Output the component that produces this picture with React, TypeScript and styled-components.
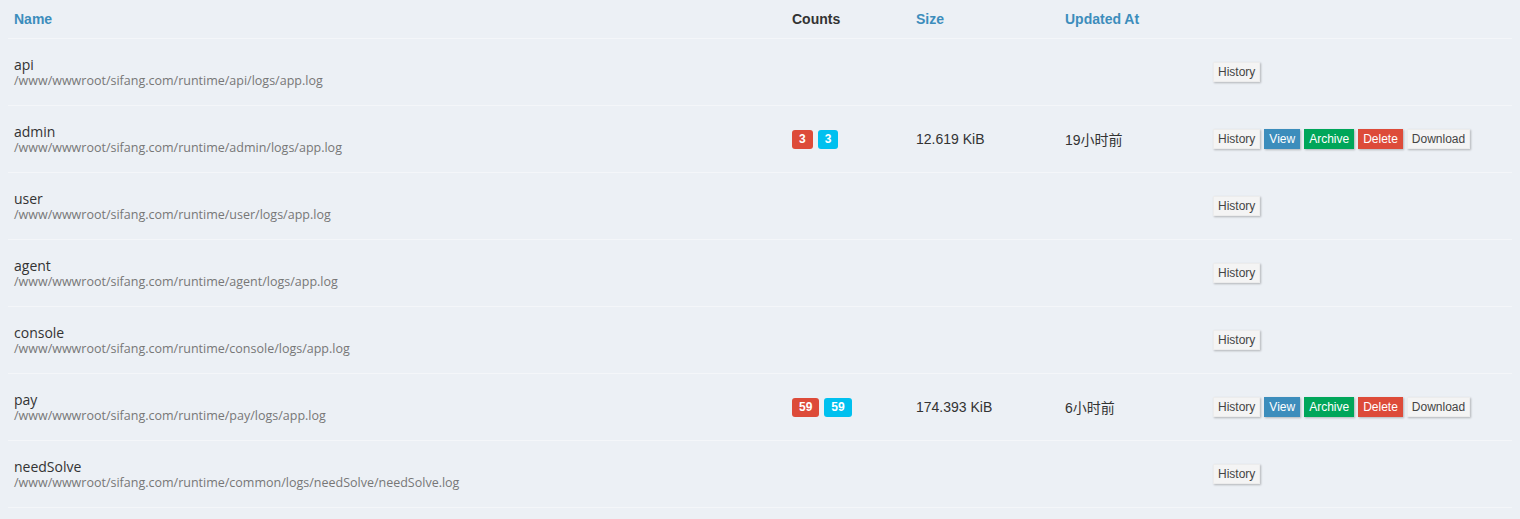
import React from "react";
import styled, { createGlobalStyle } from "styled-components";

const Global = createGlobalStyle`
  html, body { margin: 0; padding: 0; background: #ecf0f5; }
  body { font-family: "Liberation Sans", Arial, sans-serif; color: #333; }
`;

const Wrap = styled.div`
  padding: 0 8px;
`;

const Table = styled.table`
  width: 100%;
  border-collapse: collapse;
  table-layout: fixed;
`;

const Th = styled.th<{ $w?: number; $plain?: boolean }>`
  ${(p) => (p.$w ? `width: ${p.$w}px;` : "")}
  height: 38px;
  padding: 0 6px;
  text-align: left;
  vertical-align: middle;
  font-family: "Liberation Sans", Arial, sans-serif;
  font-size: 14px;
  font-weight: bold;
  color: ${(p) => (p.$plain ? "#333" : "#3c8dbc")};
`;

const Tr = styled.tr`
  border-top: 1px solid #f4f6f9;
  border-bottom: 1px solid #f4f6f9;
`;

const Td = styled.td`
  height: 66px;
  padding: 0 6px;
  vertical-align: middle;
  font-size: 14px;
  color: #333;
`;

const Name = styled.div`
  font-family: "Open Sans", "Noto Sans", sans-serif;
  font-size: 14px;
  line-height: 17px;
  color: #333;
`;

const Path = styled.div`
  font-family: "Open Sans", "Noto Sans", sans-serif;
  font-size: 12.5px;
  line-height: 15px;
  color: #777;
`;

const Badge = styled.span<{ $c: string }>`
  display: inline-block;
  margin-right: 5px;
  padding: 0 7px;
  height: 19px;
  line-height: 19px;
  border-radius: 3px;
  background: ${(p) => p.$c};
  color: #fff;
  font-family: "Liberation Sans", Arial, sans-serif;
  font-size: 12px;
  font-weight: bold;
  vertical-align: middle;
`;

const Cjk = styled.span`
  font-family: "Liberation Sans", Arial, "Noto Sans CJK SC", sans-serif;
`;

const Actions = styled.div`
  display: flex;
  gap: 4px;
  align-items: center;
`;

const Btn = styled.button<{ $bg?: string }>`
  height: 20px;
  padding: 0 4px;
  border: 1px solid ${(p) => p.$bg ?? "#ececec"};
  border-radius: 0;
  background: ${(p) => p.$bg ?? "#f4f4f4"};
  color: ${(p) => (p.$bg ? "#fff" : "#444")};
  font-family: "Liberation Sans", Arial, sans-serif;
  font-size: 12px;
  line-height: 18px;
  box-shadow: 1px 1px 2px rgba(0, 0, 0, 0.25);
  cursor: pointer;
`;

type Row = {
  name: string;
  path: string;
  counts?: [string, string];
  size?: string;
  updated?: string;
};

const rows: Row[] = [
  { name: "api", path: "/www/wwwroot/sifang.com/runtime/api/logs/app.log" },
  {
    name: "admin",
    path: "/www/wwwroot/sifang.com/runtime/admin/logs/app.log",
    counts: ["3", "3"],
    size: "12.619 KiB",
    updated: "19小时前",
  },
  { name: "user", path: "/www/wwwroot/sifang.com/runtime/user/logs/app.log" },
  { name: "agent", path: "/www/wwwroot/sifang.com/runtime/agent/logs/app.log" },
  { name: "console", path: "/www/wwwroot/sifang.com/runtime/console/logs/app.log" },
  {
    name: "pay",
    path: "/www/wwwroot/sifang.com/runtime/pay/logs/app.log",
    counts: ["59", "59"],
    size: "174.393 KiB",
    updated: "6小时前",
  },
  {
    name: "needSolve",
    path: "/www/wwwroot/sifang.com/runtime/common/logs/needSolve/needSolve.log",
  },
];

export default function App() {
  return (
    <>
      <Global />
      <Wrap>
        <Table>
          <thead>
            <tr>
              <Th $w={766}>Name</Th>
              <Th $w={112} $plain>
                Counts
              </Th>
              <Th $w={137}>Size</Th>
              <Th $w={136}>Updated At</Th>
              <Th />
            </tr>
          </thead>
          <tbody>
            {rows.map((r) => (
              <Tr key={r.name}>
                <Td>
                  <Name>{r.name}</Name>
                  <Path>{r.path}</Path>
                </Td>
                <Td>
                  {r.counts && (
                    <>
                      <Badge $c="#dd4b39">{r.counts[0]}</Badge>
                      <Badge $c="#00c0ef">{r.counts[1]}</Badge>
                    </>
                  )}
                </Td>
                <Td>{r.size}</Td>
                <Td>
                  <Cjk>{r.updated}</Cjk>
                </Td>
                <Td>
                  <Actions>
                    <Btn>History</Btn>
                    {r.counts && (
                      <>
                        <Btn $bg="#3c8dbc">View</Btn>
                        <Btn $bg="#00a65a">Archive</Btn>
                        <Btn $bg="#dd4b39">Delete</Btn>
                        <Btn>Download</Btn>
                      </>
                    )}
                  </Actions>
                </Td>
              </Tr>
            ))}
          </tbody>
        </Table>
      </Wrap>
    </>
  );
}
